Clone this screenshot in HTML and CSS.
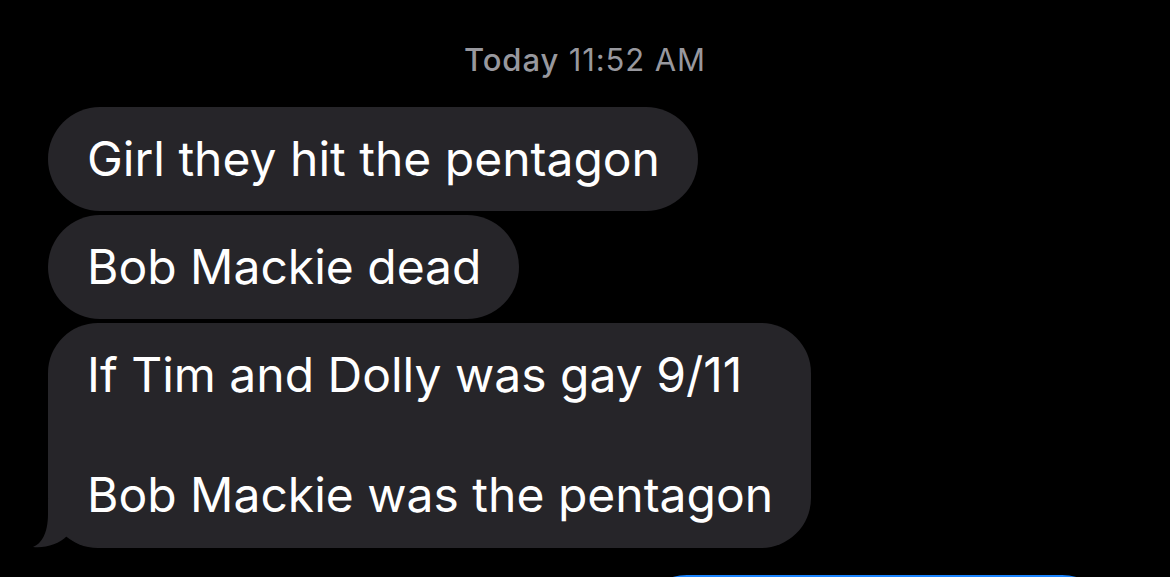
FILE: index.html
```html
<!DOCTYPE html>
<html lang="en">
<head>
<meta charset="utf-8">
<title>Messages</title>
<link rel="stylesheet" href="styles.css">
</head>
<body>
<main class="thread">
  <div class="stamp"><span class="stamp-day">Today</span> 11:52 AM</div>
  <div class="msgs">
    <div class="bubble recv">Girl they hit the pentagon</div>
    <div class="bubble recv">Bob Mackie dead</div>
    <div class="bubble recv last">If Tim and Dolly was gay 9/11<br><br>Bob Mackie was the pentagon
      <svg class="tail" width="70" height="49" viewBox="0 0 70 49" aria-hidden="true"><path d="M16 0 L16 15 C16 35 9 45 1 48 C13 49.5 27 45 35 37 C43 45 53 48 68 48 L68 0 Z" fill="#262529"/></svg>
    </div>
    <div class="bubble sent">&nbsp;</div>
  </div>
</main>
</body>
</html>
```
FILE: styles.css
```css
html, body {
  margin: 0;
  padding: 0;
  background: #000;
  height: 577px;
  overflow: hidden;
}
.thread {
  font-family: Inter, "Noto Sans", sans-serif;
  color: #fff;
}
.stamp {
  text-align: center;
  color: #98989e;
  font-size: 31px;
  line-height: 36px;
  padding-top: 42px;
  letter-spacing: 0.9px;
}
.stamp-day {
  font-weight: 500;
}
.msgs {
  display: flex;
  flex-direction: column;
  align-items: flex-start;
  gap: 4px;
  padding: 29px 48px 0 48px;
}
.bubble {
  position: relative;
  isolation: isolate;
  background: #262529;
  font-size: 48px;
  line-height: 60px;
  padding: 22px 38px 22px 39px;
  border-radius: 52px;
}
.bubble.last {
  border-radius: 50px;
  padding-bottom: 23px;
}
.tail {
  position: absolute;
  left: -16px;
  bottom: 0;
  z-index: -1;
}
.bubble.sent {
  margin-top: 23px;
  align-self: flex-end;
  background: #1b84fe;
  width: 402px;
  margin-right: 8px;
}
```
